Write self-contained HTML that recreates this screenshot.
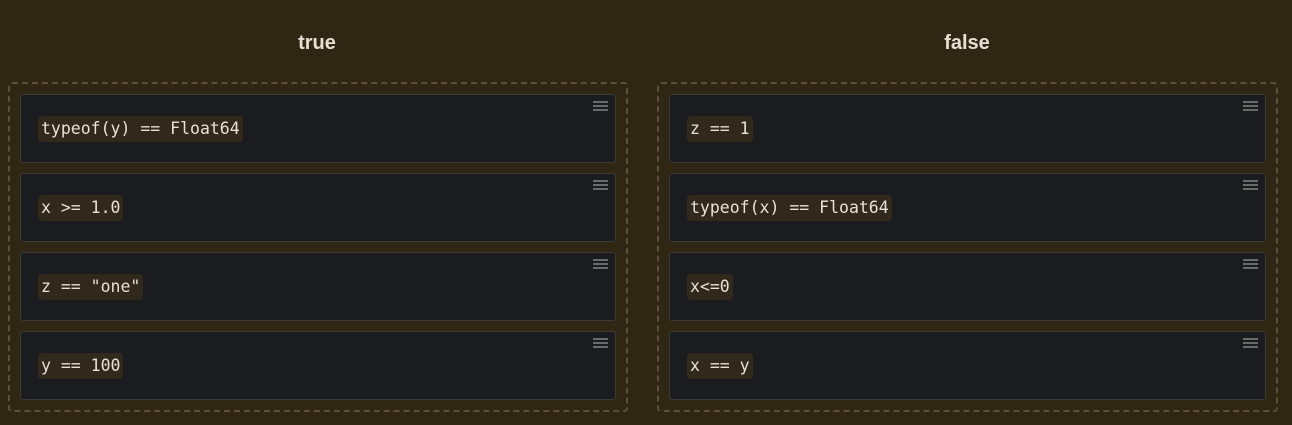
<!DOCTYPE html>
<html><head><style>
body{margin:0;width:1292px;height:425px;background:#302614;font-family:"Liberation Sans",sans-serif;position:relative;overflow:hidden}
.t{position:absolute;top:32px;font-weight:bold;font-size:20px;color:#e6e0d4;text-align:center;width:100px}
.box{position:absolute;top:82px;height:330px;border:2px dashed #5c5038;border-radius:4px;box-sizing:border-box}
.card{position:absolute;left:10px;right:10px;height:69px;background:#1b1c1f;border:1px solid #3d3a33;border-radius:3px;box-sizing:border-box}
.code{position:absolute;left:17px;top:21px;padding:2px 3px;background:#31291c;border-radius:4px;font-family:"DejaVu Sans Mono","Liberation Mono",monospace;font-size:16.5px;color:#e8e2d6;line-height:22px}
.ham{position:absolute;right:7px;top:6px;width:15px}
.ham i{display:block;height:2px;background:#6a6a6a;margin-bottom:2px}
</style></head><body>
<div class="t" style="left:267px">true</div>
<div class="t" style="left:917px">false</div>
<div class="box" style="left:8px;width:620px">
 <div class="card" style="top:10px"><span class="code">typeof(y) == Float64</span><div class="ham"><i></i><i></i><i></i></div></div>
 <div class="card" style="top:89px"><span class="code">x &gt;= 1.0</span><div class="ham"><i></i><i></i><i></i></div></div>
 <div class="card" style="top:168px"><span class="code">z == "one"</span><div class="ham"><i></i><i></i><i></i></div></div>
 <div class="card" style="top:247px"><span class="code">y == 100</span><div class="ham"><i></i><i></i><i></i></div></div>
</div>
<div class="box" style="left:657px;width:621px">
 <div class="card" style="top:10px"><span class="code">z == 1</span><div class="ham"><i></i><i></i><i></i></div></div>
 <div class="card" style="top:89px"><span class="code">typeof(x) == Float64</span><div class="ham"><i></i><i></i><i></i></div></div>
 <div class="card" style="top:168px"><span class="code">x&lt;=0</span><div class="ham"><i></i><i></i><i></i></div></div>
 <div class="card" style="top:247px"><span class="code">x == y</span><div class="ham"><i></i><i></i><i></i></div></div>
</div>
</body></html>
